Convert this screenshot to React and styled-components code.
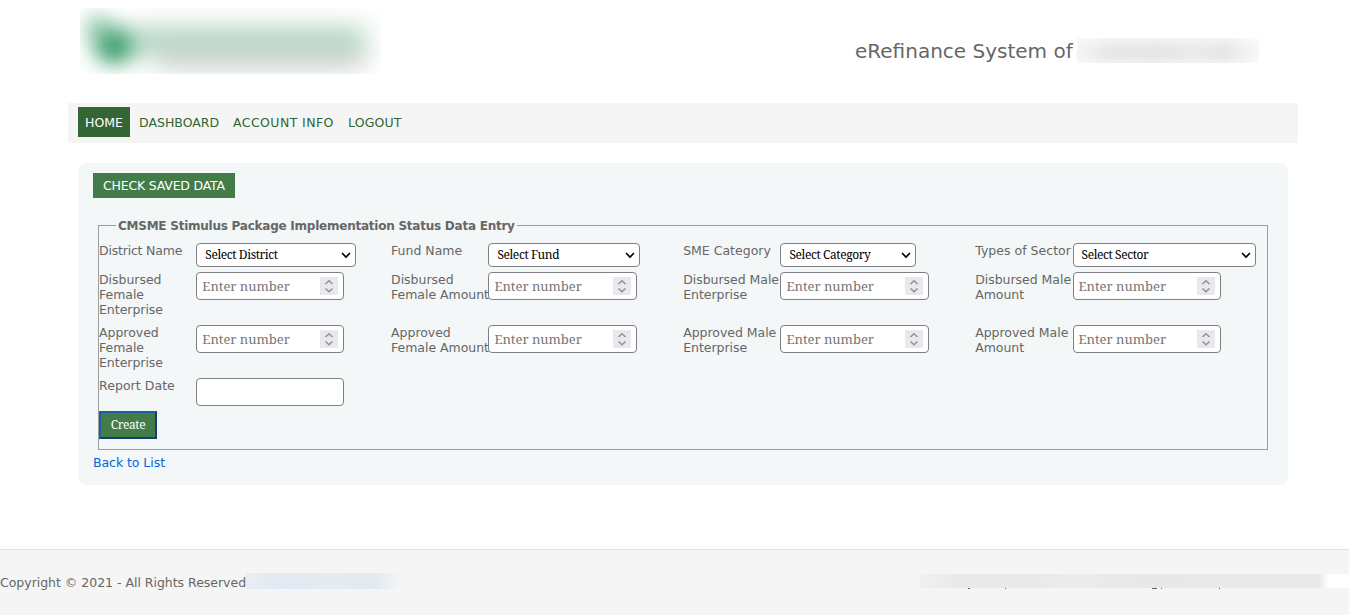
import React from "react";
import styled, { createGlobalStyle } from "styled-components";

const GlobalStyle = createGlobalStyle`
  * { box-sizing: border-box; }
  body {
    margin: 0;
    background: #fff;
    color: #666;
    font: 12.5px/15px Verdana, "DejaVu Sans", sans-serif;
    overflow: hidden;
  }
`;

const Page = styled.div`
  display: flex;
  flex-direction: column;
  height: 615px;
`;

const Header = styled.header`
  display: flex;
  justify-content: space-between;
  height: 103px;
  padding: 8px 90px 0 80px;
`;

const Logo = styled.div`
  width: 301px;
  height: 66px;
  overflow: hidden;
  svg { display: block; }
`;

const SystemName = styled.div`
  display: flex;
  align-items: center;
  height: 25px;
  margin-top: 30px;
  font-size: 20px;
  white-space: nowrap;
  span { width: 222px; padding-top: 2px; }
`;

const HiddenName = styled.i`
  width: 182px;
  height: 25px;
  background:
    linear-gradient(#ffffff80, #fff0 45%, #fff0 70%, #ffffff60),
    linear-gradient(90deg, #f4f4f4, #e8e8e8 18%, #e6e6e6 45%, #ebebeb 64%, #e7e7e7 82%, #f8f8f8);
`;

const Nav = styled.nav`
  display: flex;
  align-items: center;
  height: 40px;
  margin: 0 51px 0 68px;
  padding: 0 10px 3px;
  background: #f5f5f5;
`;

const NavItem = styled.a`
  display: flex;
  align-items: center;
  height: 30px;
  width: ${(p) => p.$w}px;
  padding: 2px 0 0 7px;
  white-space: nowrap;
  letter-spacing: ${(p) => p.$ls || 0}px;
  margin-right: ${(p) => (p.$active ? 2 : 0)}px;
  color: ${(p) => (p.$active ? "#fff" : "#2f662f")};
  background: ${(p) => (p.$active ? "#336633" : "transparent")};
`;

const Panel = styled.main`
  height: 322px;
  margin: 20px 61px 0 78px;
  padding: 10px 20px 0 15px;
  border-radius: 8px;
  background: #f3f7f8;
`;

const SavedButton = styled.a`
  display: flex;
  align-items: center;
  justify-content: center;
  width: 142px;
  height: 25px;
  background: #437b49;
  color: #fff;
  white-space: nowrap;
  letter-spacing: -0.2px;
`;

const Fieldset = styled.fieldset`
  height: 232px;
  margin: 20px 0 0 5px;
  padding: 10px 0 0;
  border: 1px solid #999e9e;
  min-width: 0;
`;

const Legend = styled.legend`
  width: 401px;
  height: 15px;
  margin-left: 17px;
  padding: 0 2px;
  font-size: 12px;
  line-height: 17px;
  font-weight: bold;
  white-space: nowrap;
  letter-spacing: -0.24px;
`;

const Row = styled.div`
  display: grid;
  grid-template-columns: repeat(4, 292.07px);
  height: ${(p) => p.$h}px;
`;

const Field = styled.div`
  display: grid;
  grid-template-columns: 97.33px 1fr;
  align-items: start;
`;

const Label = styled.label`
  white-space: pre;
  letter-spacing: ${(p) => p.$ls || 0}px;
`;

const Box = styled.div`
  display: flex;
  align-items: center;
  justify-content: space-between;
  border: 1px solid #7f7f84;
  border-radius: 4px;
  background: #fff;
  white-space: nowrap;
  font-family: "Noto Serif", "DejaVu Serif Condensed", "DejaVu Serif", serif;
`;

const SelectBox = styled(Box)`
  width: ${(p) => p.$w}px;
  height: 24px;
  padding: 0 4px 0 8px;
  color: #000;
  font-size: 12px;
  letter-spacing: -0.4px;
  span { padding-bottom: 2px; }
`;

const InputBox = styled(Box)`
  width: 148.12px;
  height: 28px;
  padding: 0 5px;
  color: #757575;
  font-size: 13px;
`;

const Spinner = styled.span`
  display: flex;
  width: 18px;
  height: 18px;
  background: #e9e9ed;
`;

const CreateButton = styled.button`
  display: block;
  width: 58px;
  height: 28px;
  padding: 0 0 2px;
  border: 2px solid;
  border-color: #1a5fa8 #123f70 #123f70 #1a5fa8;
  background: #437b49;
  color: #fff;
  font: 12px "Noto Serif", "DejaVu Serif Condensed", "DejaVu Serif", serif;
  letter-spacing: -0.4px;
`;

const BackLink = styled.a`
  display: block;
  margin-top: 5px;
  color: #0366d6;
  letter-spacing: -0.06px;
`;

const Footer = styled.footer`
  display: flex;
  justify-content: space-between;
  height: 66px;
  margin-top: 64px;
  padding-top: 23px;
  border-top: 1px solid #e2e2e2;
  background: #f5f5f5;
`;

const Copyright = styled.div`
  display: flex;
  height: 16px;
  line-height: 19px;
  white-space: nowrap;
  letter-spacing: -0.02px;
  span { width: 246px; }
`;

const HiddenOwner = styled.i`
  width: 154px;
  background: linear-gradient(90deg, #e9eef3, #e2e9f2 20%, #e4ebf3 60%, #e2e9f2 84%, #f5f5f5);
`;

const Credits = styled.div`
  width: 429px;
  height: 16px;
  padding-top: 1px;
  svg { display: block; }
`;

const HiddenCredits = styled.div`
  height: 14px;
  background: linear-gradient(90deg, #f0f0f0, #e8e8e8 10%, #ebebeb 38%, #e7e7e7 55%, #eaeaea 75%, #e8e8e8 93%, #fff 95.3%);
`;

const Chevron = () => (
  <svg width="10" height="8" viewBox="0 0 10 8" fill="none" stroke="#000" strokeWidth="1.6">
    <path d="M1 2l4 4 4-4" />
  </svg>
);

const Arrows = () => (
  <Spinner>
    <svg width="18" height="18" viewBox="0 0 18 18" fill="none" stroke="#8f8f9d" strokeWidth="1.5">
      <path d="M5.5 7L9 3.7 12.5 7M5.5 11.5L9 14.8l3.5-3.3" />
    </svg>
  </Spinner>
);

const selects = [
  ["District Name", "Select District", 160, -0.2],
  ["Fund Name", "Select Fund", 152, 0],
  ["SME Category", "Select Category", 136, 0],
  ["Types of Sector", "Select Sector", 183, 0.02],
];

const numberRows = ["Disbursed", "Approved"].map((kind) => [
  `${kind}\nFemale\nEnterprise`,
  `${kind}\nFemale Amount`,
  `${kind} Male\nEnterprise`,
  `${kind} Male\nAmount`,
]);

export default function App() {
  return (
    <Page>
      <GlobalStyle />
      <Header>
        <Logo>
          <svg width="301" height="66" viewBox="0 0 301 66">
            <defs>
              <filter id="soft" x="-100%" y="-100%" width="300%" height="300%" colorInterpolationFilters="sRGB">
                <feGaussianBlur stdDeviation="10" />
              </filter>
              <filter id="wide" x="-20%" y="-200%" width="140%" height="500%" colorInterpolationFilters="sRGB">
                <feGaussianBlur stdDeviation="13" />
              </filter>
            </defs>
            <rect x="45" y="20" width="240" height="26" fill="#8fc3a6" opacity=".75" filter="url(#wide)" />
            <rect x="75" y="44" width="210" height="14" fill="#aaa" opacity=".65" filter="url(#wide)" />
            <ellipse cx="18" cy="20" rx="13" ry="14" fill="#5fae85" opacity=".6" filter="url(#soft)" />
            <ellipse cx="34" cy="38" rx="20" ry="18" fill="#2f9763" opacity=".9" filter="url(#soft)" />
          </svg>
        </Logo>
        <SystemName>
          <span>eRefinance System of</span>
          <HiddenName />
        </SystemName>
      </Header>
      <Nav>
        <NavItem $active $w={52}>HOME</NavItem>
        <NavItem $w={94}>DASHBOARD</NavItem>
        <NavItem $w={115} $ls={0.42}>ACCOUNT INFO</NavItem>
        <NavItem $w={70} $ls={0.15}>LOGOUT</NavItem>
      </Nav>
      <Panel>
        <SavedButton>CHECK SAVED DATA</SavedButton>
        <Fieldset>
          <Legend>CMSME Stimulus Package Implementation Status Data Entry</Legend>
          <Row $h={29}>
            {selects.map(([label, text, w, ls]) => (
              <Field key={label}>
                <Label $ls={ls}>{label}</Label>
                <SelectBox $w={w}><span>{text}</span><Chevron /></SelectBox>
              </Field>
            ))}
          </Row>
          {numberRows.map((row) => (
            <Row $h={53} key={row[0]}>
              {row.map((label) => (
                <Field key={label}>
                  <Label $ls={-0.03}>{label}</Label>
                  <InputBox>Enter number<Arrows /></InputBox>
                </Field>
              ))}
            </Row>
          ))}
          <Row $h={33}>
            <Field>
              <Label $ls={0.05}>Report Date</Label>
              <InputBox />
            </Field>
          </Row>
          <CreateButton>Create</CreateButton>
        </Fieldset>
        <BackLink>Back to List</BackLink>
      </Panel>
      <Footer>
        <Copyright>
          <span>Copyright © 2021 - All Rights Reserved</span>
          <HiddenOwner />
        </Copyright>
        <Credits>
          <HiddenCredits />
          <svg width="429" height="1" fill="#666">
            <path d="M48 0h2v1h-2zM85 0h1v1h-1zM232 0h5v1h-5zM241 0h1v1h-1zM299 0h1v1h-1z" />
          </svg>
        </Credits>
      </Footer>
    </Page>
  );
}
